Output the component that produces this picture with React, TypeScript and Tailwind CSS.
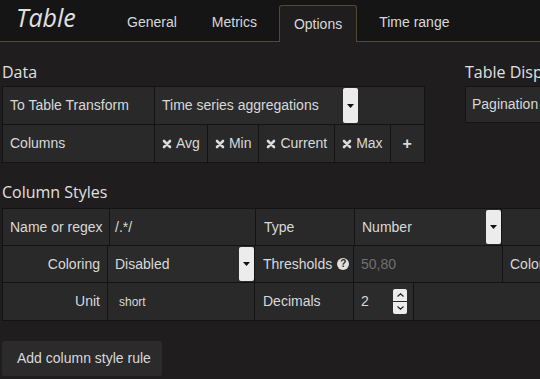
import React from 'react';

const sans = { fontFamily: '"Liberation Sans", Arial, sans-serif' };
const open = { fontFamily: '"Open Sans", "Noto Sans", sans-serif' };

function XIcon() {
  return (
    <svg className="w-[10px] h-[10px] mr-[4px]" viewBox="0 0 10 10">
      <path d="M2 2L8 8M8 2L2 8" stroke="#d8d9da" strokeWidth={2.6} strokeLinecap="round" />
    </svg>
  );
}

function Caret() {
  return (
    <div className="w-[15px] self-stretch my-[1px] bg-[#ececec] rounded-[2px] flex items-center justify-center shrink-0">
      <svg className="w-[7px] h-[4px]" viewBox="0 0 7 4">
        <path d="M0 0h7L3.5 4z" fill="#111" />
      </svg>
    </div>
  );
}

function Cell({ w, children, className = '' }: { w: string; children?: React.ReactNode; className?: string }) {
  return <div className={`${w} shrink-0 bg-[#292929] flex items-center ${className}`}>{children}</div>;
}

function Chip({ label }: { label: string }) {
  return (
    <div className="bg-[#292929] flex items-center px-[7px] shrink-0">
      <XIcon />
      <span>{label}</span>
    </div>
  );
}

export default function App() {
  return (
    <div className="w-[540px] h-[379px] overflow-hidden bg-[#1f1d1d] text-[#d8d9da] text-[14px]" style={sans}>
      {/* Header */}
      <header className="h-[42px] bg-[#151515] border-b border-[#4d4a35] flex items-end">
        <div className="self-center pl-[16px] w-[111px] text-[25px] italic text-[#e0e0e0] leading-none -mt-[6px]" style={open}>
          Table
        </div>
        <div className="flex items-end">
          <div className="px-[16px] h-[37px] flex items-center">General</div>
          <div className="px-[19px] h-[37px] flex items-center">Metrics</div>
          <div className="ml-[3px] px-[14px] h-[37px] -mb-[1px] flex items-center bg-[#1f1d1d] border border-b-0 border-[#4d4a35] rounded-t-[3px]">
            Options
          </div>
          <div className="px-[22px] h-[37px] flex items-center">Time range</div>
        </div>
      </header>

      {/* Data + Table Display */}
      <div className="flex pt-[20px]">
        <section className="w-[465px] shrink-0 pl-[2px]">
          <h2 className="text-[16px] text-[#e0e0e0] leading-[20px] mb-[4px]" style={open}>Data</h2>
          <div className="w-[423px] bg-[#131313] p-[1px] flex flex-col gap-[1px]">
            <div className="flex h-[37px] gap-[1px]">
              <Cell w="w-[151px]" className="pl-[7px]">To Table Transform</Cell>
              <div className="flex-1 bg-[#292929] flex items-stretch">
                <div className="w-[188px] flex items-center pl-[7px] bg-[#2b2b2b]">Time series aggregations</div>
                <Caret />
              </div>
            </div>
            <div className="flex h-[37px] gap-[1px]">
              <Cell w="w-[151px]" className="pl-[7px]">Columns</Cell>
              <Chip label="Avg" />
              <Chip label="Min" />
              <Chip label="Current" />
              <Chip label="Max" />
              <div className="flex-1 bg-[#292929] flex items-center justify-center text-[16px] font-bold">+</div>
            </div>
          </div>
        </section>
        <section className="flex-1">
          <h2 className="text-[16px] text-[#e0e0e0] leading-[20px] mb-[4px] whitespace-nowrap" style={open}>Table Display</h2>
          <div className="h-[37px] w-[120px] bg-[#292929] border border-[#131313] flex items-center pl-[6px]">Pagination</div>
        </section>
      </div>

      {/* Column Styles */}
      <section className="pl-[2px] pt-[19px]">
        <h2 className="text-[16px] text-[#e0e0e0] leading-[20px] mb-[6px]" style={open}>Column Styles</h2>
        <div className="w-[560px] bg-[#131313] p-[1px] flex flex-col gap-[1px]">
          <div className="flex h-[36px] gap-[1px]">
            <Cell w="w-[106px]" className="pl-[7px]">Name or regex</Cell>
            <Cell w="w-[145px]" className="pl-[5px] bg-[#2b2b2b]">/.*/</Cell>
            <Cell w="w-[98px]" className="pl-[8px]">Type</Cell>
            <div className="w-[146px] shrink-0 bg-[#2b2b2b] flex items-stretch">
              <div className="flex-1 flex items-center pl-[7px]">Number</div>
              <Caret />
            </div>
            <div className="flex-1 bg-[#292929]" />
          </div>
          <div className="flex h-[36px] gap-[1px]">
            <Cell w="w-[104px]" className="justify-end pr-[7px]">Coloring</Cell>
            <div className="w-[146px] shrink-0 bg-[#2b2b2b] flex items-stretch">
              <div className="flex-1 flex items-center pl-[7px]">Disabled</div>
              <Caret />
            </div>
            <Cell w="w-[98px]" className="pl-[8px]">
              Thresholds
              <span className="ml-[5px] w-[12px] h-[12px] rounded-full bg-[#e0e0e0] text-[#292929] text-[10px] font-bold flex items-center justify-center leading-none">?</span>
            </Cell>
            <Cell w="w-[148px]" className="pl-[7px] text-[#707070] bg-[#2b2b2b]">50,80</Cell>
            <Cell w="flex-1" className="pl-[7px]">Colors</Cell>
          </div>
          <div className="flex h-[37px] gap-[1px]">
            <Cell w="w-[104px]" className="justify-end pr-[7px]">Unit</Cell>
            <Cell w="w-[146px]" className="pl-[11px] text-[12px] bg-[#2b2b2b]">short</Cell>
            <Cell w="w-[98px]" className="pl-[8px]">Decimals</Cell>
            <div className="w-[59px] shrink-0 bg-[#2b2b2b] flex items-center pl-[7px]">
              <span className="flex-1">2</span>
              <div className="mr-[6px] flex flex-col gap-[1px]">
                <div className="w-[14px] h-[12px] bg-[#ececec] rounded-t-[2px] flex items-center justify-center">
                  <svg className="w-[7px] h-[4px]" viewBox="0 0 7 4"><path d="M0.5 3.5L3.5 0.8L6.5 3.5" fill="none" stroke="#222" strokeWidth={1.2} /></svg>
                </div>
                <div className="w-[14px] h-[12px] bg-[#ececec] rounded-b-[2px] flex items-center justify-center">
                  <svg className="w-[7px] h-[4px]" viewBox="0 0 7 4"><path d="M0.5 0.5L3.5 3.2L6.5 0.5" fill="none" stroke="#222" strokeWidth={1.2} /></svg>
                </div>
              </div>
            </div>
            <div className="flex-1 bg-[#292929]" />
          </div>
        </div>
        <button className="mt-[20px] h-[35px] w-[160px] bg-[#2b2b2b] rounded-[2px] text-[14px] text-[#d8d9da] flex items-center pl-[15px]">
          Add column style rule
        </button>
      </section>
    </div>
  );
}
